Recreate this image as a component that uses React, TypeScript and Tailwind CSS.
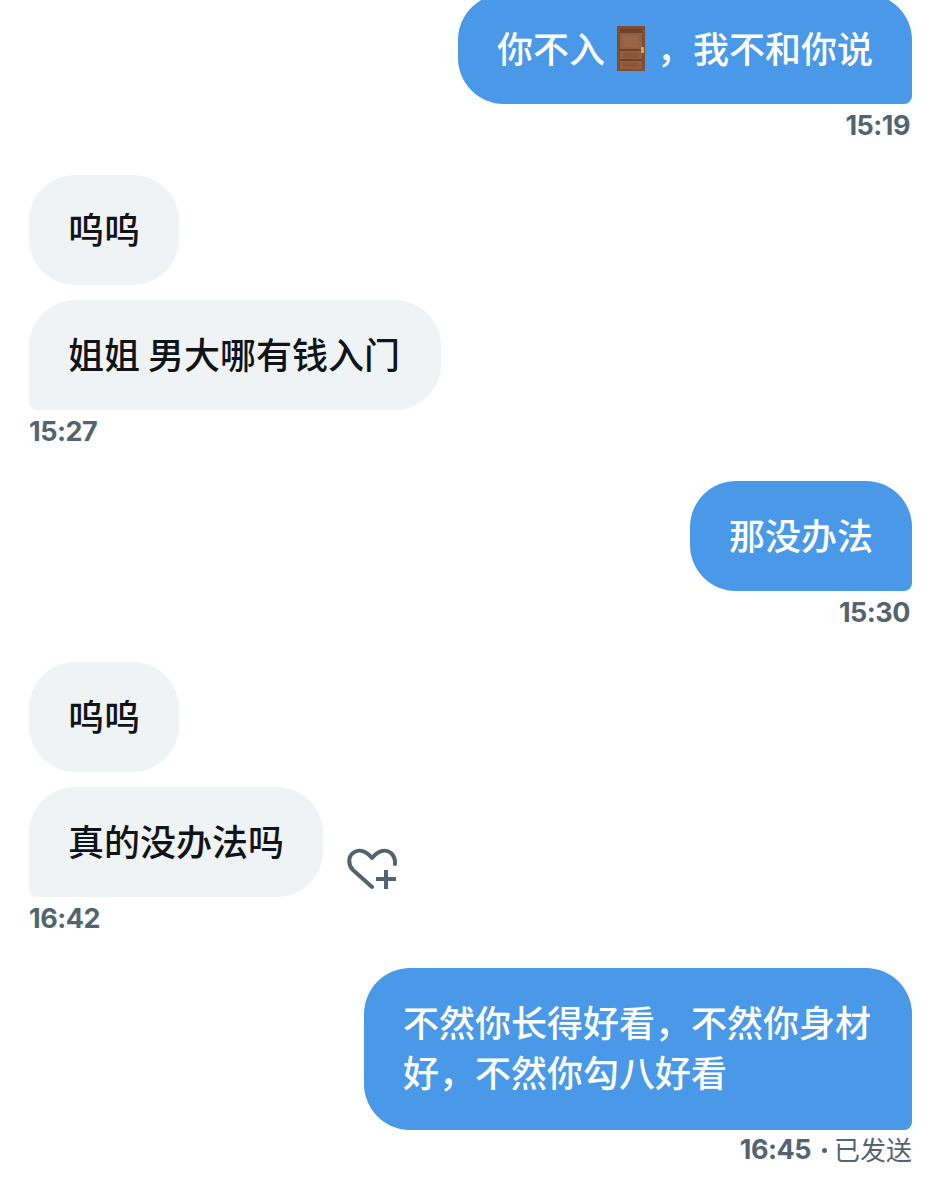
import type { ReactNode } from "react";

function Door() {
  return (
    <svg viewBox="0 0 28 45" className="mx-[12px] inline-block h-[45px] w-[28px] align-[-8px]">
      <rect width="28" height="45" fill="#7d4e33" />
      <rect x="3" y="3" width="22" height="40" fill="#935f40" />
      <rect x="3" y="3" width="22" height="4" fill="#6e4229" />
      <rect x="6" y="9" width="16" height="12" fill="#9a6545" />
      <rect x="3" y="23" width="22" height="2" fill="#6e4229" />
      <rect x="6" y="27" width="16" height="5" fill="#8a5638" />
      <rect x="3" y="33" width="22" height="2" fill="#6e4229" />
      <rect x="6" y="37" width="16" height="4" fill="#8a5638" />
      <rect x="24" y="21" width="3" height="6" fill="#d9a93f" />
    </svg>
  );
}

function HeartAdd() {
  return (
    <svg viewBox="0 0 50 44" fill="none" stroke="#536471" strokeWidth="4" className="mb-[5px] ml-[24px] h-[44px] w-[50px]">
      <path d="M25 39 L6 22 C1 17 1 9 6 5 C11 1 18 2 25 10 C32 2 39 1 44 5 C47 8 48.5 11 48 16" strokeLinecap="round" strokeLinejoin="round" />
      <path d="M39 22 V41 M29 31 H49" />
    </svg>
  );
}

function Sent({ children, time, status, className }: { children: ReactNode; time: string; status?: boolean; className?: string }) {
  return (
    <div className="flex flex-col items-end">
      <div className={`rounded-[46px] rounded-br-[8px] bg-[#4a99e9] pt-[28px] text-[36px] leading-[50px] font-medium text-white ${className ?? "px-[39px] pb-[32px]"}`}>
        {children}
      </div>
      {status ? (
        <div className="mt-[6px] flex h-[28px] items-center text-[#536471]">
          <span className="text-[27px] font-bold font-['Inter',sans-serif] tracking-[-0.5px]">{time}</span>
          <span className="ml-[11px] mr-[7px] h-[5px] w-[5px] rounded-full bg-[#536471]" />
          <span className="mb-[4px] text-[26px]">已发送</span>
        </div>
      ) : (
        <div className="mt-[8px] flex h-[28px] items-center pr-[2px] text-[#536471]">
          <span className="text-[27px] font-bold font-['Inter',sans-serif] tracking-[-0.5px]">{time}</span>
        </div>
      )}
    </div>
  );
}

function Received({ children, tail, className }: { children: ReactNode; tail?: boolean; className?: string }) {
  return (
    <div className={`w-fit rounded-[46px] bg-[#eff3f4] pt-[28px] pb-[32px] pl-[39px] text-[36px] leading-[50px] font-medium text-[#0f1419] ${tail ? "rounded-bl-[8px]" : ""} ${className ?? "pr-[39px]"}`}>
      {children}
    </div>
  );
}

function Time({ children }: { children: string }) {
  return (
    <div className="mt-[8px] flex h-[28px] items-center text-[27px] font-bold font-['Inter',sans-serif] tracking-[-0.5px] text-[#536471]">
      {children}
    </div>
  );
}

export default function App() {
  return (
    <div className="h-[1200px] overflow-hidden bg-white px-[29px] font-['Noto_Sans_CJK_SC','Noto_Sans_CJK_JP',sans-serif]">
      <div className="mt-[-6px] flex flex-col">
        <Sent time="15:19">
          你不入
          <Door />
          ，我不和你说
        </Sent>

        <div className="mt-[35px] flex flex-col gap-[15px]">
          <Received>呜呜</Received>
          <Received tail className="pr-[41px]">姐姐 男大哪有钱入门</Received>
        </div>
        <Time>15:27</Time>

        <div className="mt-[35px]">
          <Sent time="15:30">那没办法</Sent>
        </div>

        <div className="mt-[35px] flex flex-col gap-[15px]">
          <Received>呜呜</Received>
          <div className="flex items-end">
            <Received tail>真的没办法吗</Received>
            <HeartAdd />
          </div>
        </div>
        <Time>16:42</Time>

        <div className="mt-[35px]">
          <Sent time="16:45" status className="max-w-[548px] pl-[39px] pr-[41px] pb-[34px]">
            不然你长得好看，不然你身材好，不然你勾八好看
          </Sent>
        </div>
      </div>
    </div>
  );
}
